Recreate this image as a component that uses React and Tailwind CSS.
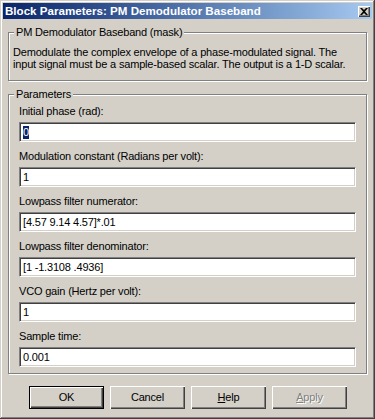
const FIELDS = [
  { label: "Initial phase (rad):", value: "0", selected: true },
  { label: "Modulation constant (Radians per volt):", value: "1" },
  { label: "Lowpass filter numerator:", value: "[4.57 9.14 4.57]*.01" },
  { label: "Lowpass filter denominator:", value: "[1 -1.3108 .4936]" },
  { label: "VCO gain (Hertz per volt):", value: "1" },
  { label: "Sample time:", value: "0.001" },
];

function GroupBox({ title, className, children }) {
  return (
    <div
      className={`relative border border-[#808080] shadow-[1px_1px_0_#fff,inset_1px_1px_0_#fff] ${className}`}
    >
      <span className="absolute -top-[7px] left-[5px] bg-[#d4d0c8] px-[2px] leading-[13px]">
        {title}
      </span>
      {children}
    </div>
  );
}

function Field({ label, value, selected }) {
  return (
    <div className="flex flex-col">
      <div className="h-[13px] leading-[13px] mb-[4px]">{label}</div>
      <div className="h-[20px] bg-white border border-t-[#808080] border-l-[#808080] border-b-white border-r-white shadow-[inset_1px_1px_0_#404040,inset_-1px_-1px_0_#d4d0c8] flex items-center pl-[3px]">
        {selected ? (
          <span className="bg-[#0a246a] text-white leading-[13px]">{value}</span>
        ) : (
          <span className="leading-[13px]">{value}</span>
        )}
      </div>
    </div>
  );
}

function Button({ children, isDefault, disabled }) {
  return (
    <button
      type="button"
      className={`w-[75px] h-[23px] flex items-center justify-center bg-[#d4d0c8] ${
        isDefault
          ? "border border-black shadow-[inset_1px_1px_0_#fff,inset_-1px_-1px_0_#404040,inset_-2px_-2px_0_#808080]"
          : "shadow-[inset_1px_1px_0_#fff,inset_-1px_-1px_0_#404040,inset_-2px_-2px_0_#808080]"
      } ${disabled ? "text-[#808080] [text-shadow:1px_1px_0_#fff]" : "text-black"}`}
    >
      {children}
    </button>
  );
}

export default function App() {
  return (
    <div className="w-[375px] h-[419px] bg-[#d4d0c8] p-[3px] flex flex-col font-['Liberation_Sans',Arial,sans-serif] text-[11px] tracking-[-0.18px] text-black shadow-[inset_-1px_-1px_0_#404040,inset_1px_1px_0_#d4d0c8,inset_-2px_-2px_0_#808080,inset_2px_2px_0_#fff]">
      {/* caption */}
      <div className="h-[16px] flex items-center justify-between bg-gradient-to-r from-[#0a246a] to-[#a6caf0] pl-[2px] pr-[2px]">
        <span className="text-white font-bold text-[11.6px] tracking-normal leading-[14px]">
          Block Parameters: PM Demodulator Baseband
        </span>
        <div className="w-[12px] h-[11px] bg-[#d4d0c8] flex items-center justify-center shadow-[inset_1px_1px_0_#fff,inset_-1px_-1px_0_#404040,inset_-2px_-2px_0_#808080]">
          <svg width="8" height="7" viewBox="0 0 8 7">
            <path d="M0 0h2l2 2 2-2h2L5 3.5 8 7H6L4 5 2 7H0l3-3.5z" fill="#000" />
          </svg>
        </div>
      </div>

      <div className="px-[5px] flex flex-col">
        <GroupBox title="PM Demodulator Baseband (mask)" className="mt-[13px] pt-[13px] pb-[10px] pl-[4px]">
          <p className="leading-[12px]">
            Demodulate the complex envelope of a phase-modulated signal. The
            <br />
            input signal must be a sample-based scalar. The output is a 1-D scalar.
          </p>
        </GroupBox>

        <GroupBox title="Parameters" className="mt-[13px] pt-[10px] pb-[6px] px-[10px]">
          <div className="flex flex-col gap-[8px]">
            {FIELDS.map((f) => (
              <Field key={f.label} {...f} />
            ))}
          </div>
        </GroupBox>
      </div>

      <div className="mt-[12px] pl-[26px] flex gap-[6px]">
        <Button isDefault>OK</Button>
        <Button>Cancel</Button>
        <Button>
          <span>
            <span className="underline">H</span>elp
          </span>
        </Button>
        <Button disabled>
          <span>
            <span className="underline">A</span>pply
          </span>
        </Button>
      </div>
    </div>
  );
}
